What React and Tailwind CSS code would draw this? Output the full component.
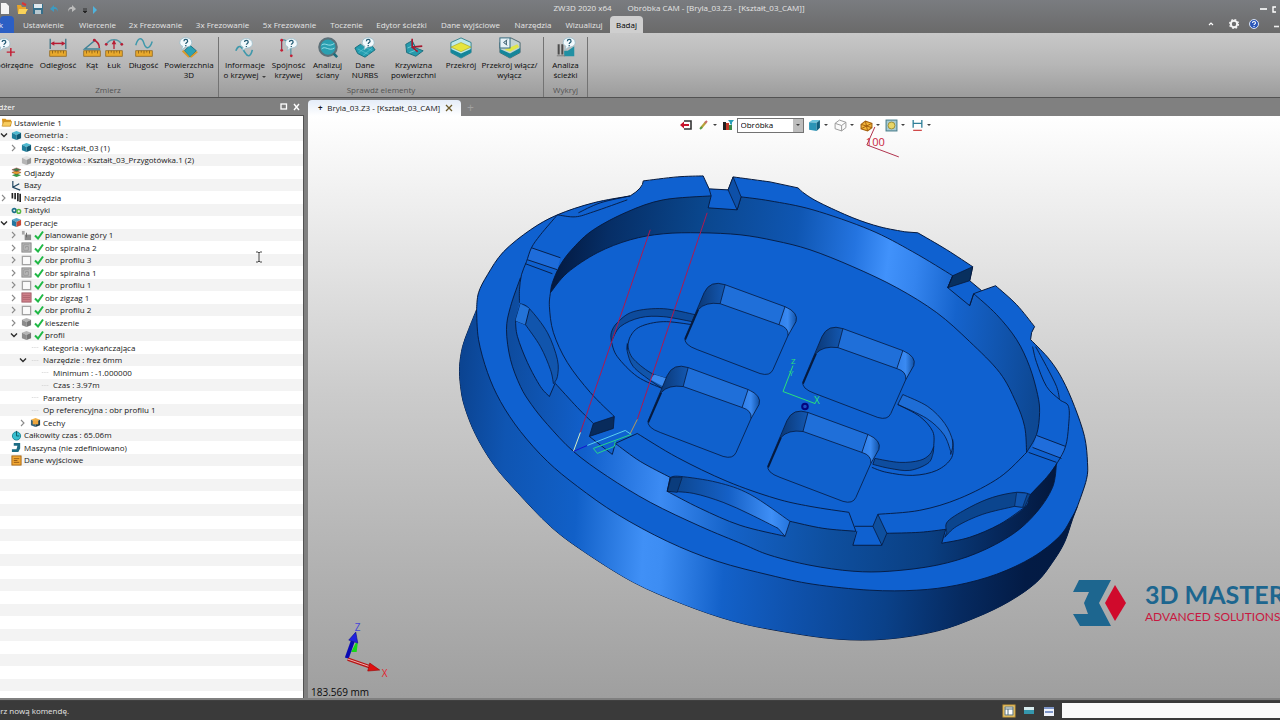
import React from "react";

/* ---------- geometry helpers ---------- */

// smooth line through a list of points, flat array: x, y, x, y ...
const curve = (flat, cmd = "M") => {
  const p = [];
  for (let i = 0; i < flat.length; i += 2) p.push([flat[i], flat[i + 1]]);
  let d = `${cmd}${p[0][0]} ${p[0][1]}`;
  for (let i = 0; i < p.length - 1; i++) {
    const a = p[i - 1] || p[i];
    const b = p[i];
    const c = p[i + 1];
    const e = p[i + 2] || c;
    d += `C${b[0] + (c[0] - a[0]) / 6} ${b[1] + (c[1] - a[1]) / 6} ${c[0] - (e[0] - b[0]) / 6} ${c[1] - (e[1] - b[1]) / 6} ${c[0]} ${c[1]}`;
  }
  return d;
};

const reverse = (flat) => {
  const out = [];
  for (let i = flat.length - 2; i >= 0; i -= 2) out.push(flat[i], flat[i + 1]);
  return out;
};

const baseTop = [630, 196, 593, 203, 557, 215, 530, 230, 503, 252, 487, 275, 478, 293, 476, 310];
const baseSide = [
  476, 310, 468, 330, 462, 347, 459, 367, 460, 387, 464, 407, 475, 435, 493, 465, 517, 493, 550, 527, 583, 552,
  633, 583, 683, 605, 733, 622, 780, 632, 837, 640, 887, 640, 937, 632, 977, 618, 1010, 602, 1037, 583, 1053, 563,
  1065, 543, 1073, 520, 1078, 507,
];
const baseRight = [1078, 507, 1087, 480, 1088, 463, 1085, 437, 1075, 407, 1063, 380, 1050, 360, 1033, 342];
const baseRim = [
  476, 310, 478, 340, 487, 373, 500, 402, 520, 432, 547, 462, 577, 487, 617, 515, 667, 542, 717, 562, 770, 576,
  813, 585, 870, 591, 917, 591, 957, 586, 997, 575, 1033, 558, 1060, 537, 1073, 517, 1078, 507,
];
const crown =
  "L1031 340L1032 333L1035 327" +
  curve([1035, 327, 1017, 305, 996, 286], "L") +
  "L982 291L970 281L973 267" +
  curve([973, 267, 947, 250, 918, 233], "L") +
  curve([905, 232, 880, 227, 853, 218, 820, 203, 805, 194, 798, 188], "L") +
  curve([770, 182, 733, 177], "L") +
  "L728 190L709 189L703 176" +
  curve([703, 176, 677, 177, 643, 181], "L") +
  "Q643 188 630 196Z";

const ringFoot = [
  520, 278, 510, 307, 506, 330, 510, 360, 520, 387, 531, 405, 547, 425, 573, 452, 607, 477, 650, 503, 700, 527,
  743, 545, 770, 556, 810, 566, 853, 572, 890, 572, 937, 566, 977, 554, 1013, 535, 1037, 513, 1053, 488, 1057, 464,
];
const ringEdge =
  curve([1057, 464, 1047, 478, 1031, 495, 1025, 508, 1000, 525, 970, 538, 942, 544], "L") +
  "L946 530" +
  curve([946, 530, 920, 533, 887, 534], "L") +
  "L882 546L853 546L856 532" +
  curve([856, 532, 823, 529, 790, 522], "L") +
  "L785 537" +
  curve([785, 537, 740, 526, 700, 509, 667, 492], "L") +
  "L670 478" +
  curve([670, 478, 640, 462, 615, 444], "L") +
  "L612 455L589 437L593 424" +
  curve([593, 424, 577, 408, 555, 384], "L") +
  "L549 397" +
  curve([549, 397, 540, 387, 527, 363, 517, 337, 515, 321], "L") +
  "L519 303L519 287Z";

const rimBack = [550, 293, 552, 283, 560, 265, 573, 248, 593, 230, 627, 212, 663, 200, 711, 196];
const rimRight = [741, 197, 770, 201, 813, 210, 870, 230, 913, 252, 953, 276];
const rimEnd = [974, 294, 997, 315, 1017, 340, 1030, 367, 1038, 395, 1040, 413, 1037, 435, 1027, 453];
const floorBack = [
  550, 293, 567, 273, 597, 253, 630, 240, 663, 234, 700, 233, 740, 235, 775, 241, 810, 250, 853, 267, 897, 288,
  937, 313, 970, 342, 1000, 373, 1016, 402, 1025, 427, 1027, 453,
];

const Pad = ({ dx, dy }) => (
  <g transform={`translate(${dx} ${dy})`}>
    <path
      d="M685 338L704 293Q710 280 725 285L785 307Q799 313 796 322L788 336L773 370Q770 377 760 374L697 350Q683 345 685 338Z"
      fill="#1061cd"
    />
    <path d="M685 340L704 293Q710 280 725 285L720 304Q705 302 698 310Z" fill="url(#corner)" />
    <path d="M725 285L785 307L779 325L720 304Z" fill="#1f6fd9" />
    <path d="M785 307Q799 313 796 322L788 336Q789 328 779 325Z" fill="url(#shine)" />
    <g fill="none" stroke="#06193c" strokeWidth="0.8">
      <path d="M685 338L704 293Q710 280 725 285L785 307Q799 313 796 322L788 336L773 370Q770 377 760 374L697 350Q683 345 685 338Z" />
      <path d="M698 310Q705 302 720 304L779 325Q789 328 788 336M725 285L720 304M785 307L779 325" />
      <path d="M685 340L698 310" strokeWidth="1.8" />
    </g>
  </g>
);

const Model = () => (
  <svg
    className="absolute inset-0 h-full w-full"
    viewBox="308 116 972 583"
    preserveAspectRatio="xMidYMid meet"
    aria-label="Model 3D"
    fontFamily="Open Sans, sans-serif"
  >
    <defs>
      <linearGradient id="side" gradientUnits="userSpaceOnUse" x1="459" x2="1088" y1="360" y2="400">
        <stop offset="0" stopColor="#0b4390" />
        <stop offset="0.08" stopColor="#0f55b2" />
        <stop offset="0.2" stopColor="#1160c8" />
        <stop offset="0.31" stopColor="#4090f6" />
        <stop offset="0.34" stopColor="#3d8df3" />
        <stop offset="0.44" stopColor="#1361c9" />
        <stop offset="0.55" stopColor="#0f52ad" />
        <stop offset="0.7" stopColor="#0a4189" />
        <stop offset="0.82" stopColor="#062a60" />
        <stop offset="0.92" stopColor="#031b45" />
        <stop offset="1" stopColor="#031a42" />
      </linearGradient>
      <linearGradient id="ring" gradientUnits="userSpaceOnUse" x1="506" x2="1058" y1="400" y2="440">
        <stop offset="0" stopColor="#0e4c9f" />
        <stop offset="0.15" stopColor="#1160cc" />
        <stop offset="0.29" stopColor="#3c8bf3" />
        <stop offset="0.42" stopColor="#1462c8" />
        <stop offset="0.6" stopColor="#0e4f9f" />
        <stop offset="0.78" stopColor="#0a3f82" />
        <stop offset="0.9" stopColor="#06285c" />
        <stop offset="1" stopColor="#03183e" />
      </linearGradient>
      <linearGradient id="inner" gradientUnits="userSpaceOnUse" x1="550" x2="1040" y1="300" y2="360">
        <stop offset="0" stopColor="#031a42" />
        <stop offset="0.1" stopColor="#062e66" />
        <stop offset="0.28" stopColor="#0a468c" />
        <stop offset="0.48" stopColor="#0f56b2" />
        <stop offset="0.6" stopColor="#2474e0" />
        <stop offset="0.67" stopColor="#4192fb" />
        <stop offset="0.73" stopColor="#3484ee" />
        <stop offset="0.82" stopColor="#1563cc" />
        <stop offset="1" stopColor="#0d4894" />
      </linearGradient>
      <linearGradient id="slot" x1="0" x2="1" y1="0" y2="0">
        <stop offset="0" stopColor="#0b4287" />
        <stop offset="0.5" stopColor="#1560c6" />
        <stop offset="0.85" stopColor="#3f8ff6" />
        <stop offset="1" stopColor="#2474dd" />
      </linearGradient>
      <linearGradient id="corner" x1="0" x2="1" y1="0" y2="0">
        <stop offset="0" stopColor="#07295a" />
        <stop offset="1" stopColor="#1358b2" />
      </linearGradient>
      <linearGradient id="shine" x1="0" x2="1" y1="0" y2="0">
        <stop offset="0" stopColor="#2f7fea" />
        <stop offset="0.5" stopColor="#3a8af2" />
        <stop offset="1" stopColor="#0f50a6" />
      </linearGradient>
    </defs>

    {/* body */}
    <path d={curve(baseTop) + curve(baseSide, "L") + curve(baseRight, "L") + crown} fill="#0f61d0" stroke="#06193c" />
    <path d={curve(baseSide) + curve(reverse(baseRim), "L") + "Z"} fill="url(#side)" />
    <path d={curve(ringFoot) + ringEdge} fill="url(#ring)" />

    {/* inside wall */}
    <path
      d={
        curve(rimBack) +
        "L708 208L737 210L741 197" +
        curve(rimRight, "L") +
        "L948 288L970 306L974 294" +
        curve(rimEnd, "L") +
        curve(reverse(floorBack), "L") +
        "Z"
      }
      fill="url(#inner)"
      stroke="#06193c"
      strokeWidth="0.9"
    />
    <path d="M733 177L741 197L737 210L728 190Z" fill="#0e50a8" stroke="#06193c" strokeWidth="0.8" />
    <path d="M973 267L970 281L948 288L953 276Z" fill="#08305f" stroke="#06193c" strokeWidth="0.8" />
    <path d="M593 424L614 417L613 429L589 437Z" fill="#082b5c" stroke="#06193c" strokeWidth="0.8" />
    <path d="M878 515L887 534L882 546L873 527Z" fill="#0e4f9e" stroke="#06193c" strokeWidth="0.8" />

    {/* ramps on the ring */}
    <path d="M531 248L560 258L557 270L527 260Z" fill="#1e6cda" />
    <path d="M1037 436L1066 447L1062 459L1033 448Z" fill="#1f6ddb" />

    {/* left slot */}
    <path d={curve([520, 304, 529, 309, 547, 333, 557, 360, 557, 377, 553, 384]) + curve([553, 384, 550, 370, 540, 347, 525, 325], "L") + "L515 321Z"} fill="#1155ad" stroke="#06193c" strokeWidth="0.8" />
    <path d="M520 304L529 309L525 325L515 321Z" fill="#2373d8" />

    {/* bottom slot */}
    <path d={curve([670, 478, 680, 477, 717, 483, 750, 495, 790, 522]) + "L785 537" + curve([778, 529, 750, 515, 723, 503, 693, 494, 667, 492], "L") + "Z"} fill="url(#slot)" stroke="#06193c" strokeWidth="0.8" />
    <path d="M671 478L682 478L677 493L667 492Z" fill="#0a3c7c" stroke="#06193c" strokeWidth="0.6" />

    {/* right slot */}
    <path d={curve([947, 533, 948, 522, 970, 508, 993, 498, 1017, 493, 1031, 495]) + "L1025 508" + curve([1015, 507, 983, 515, 957, 527, 945, 538], "L") + "Z"} fill="#0b458e" stroke="#06193c" strokeWidth="0.8" />
    <path d="M1017 493L1028 494L1023 508L1015 507Z" fill="#1156b0" stroke="#06193c" strokeWidth="0.6" />

    {/* circular groove */}
    <path d={curve([611, 342, 611, 333, 617, 323, 633, 312, 663, 309, 695, 315]) + curve([692, 322, 663, 317, 640, 318, 620, 327, 611, 342], "L") + "Z"} fill="#0d4b9c" stroke="#06193c" strokeWidth="0.8" />
    <path d={curve([627, 344, 632, 358, 650, 373, 667, 379]) + "L662 389" + curve([650, 381, 633, 367, 627, 352, 627, 344], "L")} fill="#1155ab" stroke="#06193c" strokeWidth="0.8" />
    <path d="M654 375L667 379L663 387L650 380Z" fill="#3a8af0" />
    <path d={curve([903, 395, 928, 407, 945, 424, 953, 442, 951, 455]) + curve([951, 452, 944, 435, 927, 419, 898, 405], "L") + "Z"} fill="#1e6dd6" stroke="#06193c" strokeWidth="0.8" />
    <path d={curve([934, 447, 930, 455, 920, 461, 900, 463, 875, 459]) + "L873 465" + curve([873, 465, 890, 469, 910, 471, 928, 464, 933, 455, 934, 447], "L")} fill="#0e4d9f" stroke="#06193c" strokeWidth="0.8" />

    {/* edges */}
    <g fill="none" stroke="#06193c" strokeWidth="0.9">
      <path d={curve(baseRim)} />
      <path d={curve(ringFoot)} />
      <path d={curve([557, 215, 540, 235, 531, 248, 526, 262, 521, 275, 519, 290, 519, 303])} />
      <path d="M857 532L853 546L882 546M856 532L849 513M855 527L873 527M670 478L667 492M946 530L942 544" />
      <path d={curve([942, 544, 970, 538, 1000, 525, 1025, 508])} />
      <path d={curve([667, 492, 700, 509, 740, 526, 785, 537])} />
      <path d={curve([515, 321, 517, 337, 527, 363, 540, 387, 549, 397]) + "L555 383"} />
      <path d={curve([555, 384, 577, 408, 593, 424]) + "M589 437L612 455L615 444"} />
      <path d={curve([615, 444, 640, 462, 670, 478]) + curve([790, 522, 823, 529, 856, 532]) + curve([887, 534, 920, 533, 946, 530])} />
      <path d={curve([550, 293, 549, 307, 553, 333, 567, 363, 590, 393, 614, 417])} />
      <path d={"M615 444L637 434" + curve([637, 434, 677, 458, 727, 482, 775, 499, 810, 507, 849, 513])} />
      <path d={curve([878, 515, 920, 511, 960, 499, 1000, 478, 1027, 453])} />
      <path d={curve([1031, 495, 1047, 478, 1058, 463, 1066, 447, 1069, 427, 1069, 407, 1060, 400, 1047, 387, 1037, 363, 1033, 347])} />
      <path d={curve([1036, 347, 1047, 367, 1057, 387, 1060, 400])} />
      <path d={curve([557, 215, 575, 217, 593, 212, 627, 200]) + curve([578, 213, 600, 203, 630, 196])} />
      <path d="M531 248L560 258M527 260L557 270M525 264L552 274M1037 436L1066 447M1033 448L1062 459M1029 453L1057 463" />
      <path d={curve([611, 342, 617, 357, 637, 377, 662, 389])} />
      <path d={curve([692, 325, 663, 322, 640, 327, 630, 337, 627, 350])} />
      <path d={curve([898, 405, 920, 417, 933, 432, 934, 447])} />
      <path d={curve([953, 440, 952, 458, 937, 471, 913, 476, 887, 473, 872, 468])} />
      <path d="M948 288L953 276M970 306L974 294L982 291M709 189L711 196M529 309L525 325" />
    </g>

    <Pad dx={0} dy={0} />
    <Pad dx={118} dy={44} />
    <Pad dx={-37} dy={83} />
    <Pad dx={83} dy={128} />

    {/* tool path */}
    <g fill="none" strokeWidth="1">
      <path d="M650 230L580 433M707 213L637 420" stroke="#b0194f" />
      <path d="M580 433L573 452" stroke="#d8efc2" />
      <path d="M637 420L630 434" stroke="#b59a5c" />
      <path d="M573 452L587 446" stroke="#1414d0" />
      <path d="M587 446L625 431L631 435" stroke="#5bd0ee" />
      <path d="M631 435L593 449L597 454L614 447L615 442" stroke="#25d48c" />
    </g>

    {/* local axes */}
    <path d="M793 366L783 392L815 404" fill="none" stroke="#2be07a" />
    <text x="791" y="364" fontSize="8" fill="#2be07a">Z</text>
    <text x="789" y="376" fontSize="8" fill="#2be07a">Y</text>
    <text x="814" y="405" fontSize="10" fill="#2be07a">X</text>
    <circle cx="805" cy="407" r="2.8" fill="#1c4fc4" stroke="#05057c" strokeWidth="2" />

    {/* dimension */}
    <path d="M875 127L867 145L899 157" fill="none" stroke="#b0324c" />
    <text x="866" y="146" fontSize="11" fill="#c8243c">100</text>

    {/* view triad */}
    <path d="M352 652L356 644L355 652Z" fill="#18d818" stroke="#18d818" strokeWidth="2" />
    <path d="M346 659L352 642" stroke="#0a0ab4" strokeWidth="4" />
    <path d="M355 633L357 644L348 641Z" fill="#2020e0" stroke="#0a0a8c" strokeWidth="0.6" />
    <path d="M347 660L370 668" stroke="#b81414" strokeWidth="3.4" />
    <path d="M347 660L369 667.6" stroke="#f0b0b0" strokeWidth="1" />
    <path d="M369 664L379 671L367 672Z" fill="#e01010" stroke="#900" strokeWidth="0.6" />
    <text x="354" y="632" fontSize="10" fill="#4545d8">Z</text>
    <text x="381" y="678" fontSize="10" fill="#e0222c">X</text>
  </svg>
);

/* ---------- ribbon icons, 24 x 24 ---------- */

const Bubble = ({ x = 14, y = 7 }) => (
  <g transform={`translate(${x} ${y})`}>
    <path d="M-6 0C-6 -7 7 -7 7 0C7 4 3 5 0 5L-4 8L-3 4C-5 3 -6 2 -6 0Z" fill="#f2f9fc" stroke="#93bccb" strokeWidth="0.8" />
    <path d="M-1.500 -1.500C-1.500 -4 2.500 -4 2.500 -1.500C2.500 0 0.500 0 0.500 1.500M0.500 2.800V4" fill="none" stroke="#245b74" strokeWidth="1.400" />
  </g>
);

const Ruler = () => (
  <g>
    <rect x="3" y="15" width="18" height="6" fill="#e8a92c" stroke="#8d6112" strokeWidth="0.8" />
    <path d="M6 15V18M9 15V17M12 15V18M15 15V17M18 15V18" stroke="#7a5210" strokeWidth="0.8" />
  </g>
);

const icons = {
  point: (
    <>
      <Bubble x={6} y={7} />
      <path d="M14 12V21M9.500 16.500H18.500" stroke="#c41e34" strokeWidth="1.600" />
    </>
  ),
  distance: (
    <>
      <Ruler />
      <path d="M3.500 2V13M20.500 2V13" stroke="#3b7184" strokeWidth="1.400" />
      <path d="M5 7H19" stroke="#b81c34" strokeWidth="1.600" />
      <path d="M4 7L8 4.500V9.500ZM20 7L16 4.500V9.500Z" fill="#b81c34" />
    </>
  ),
  angle: (
    <>
      <Ruler />
      <path d="M16 3L4 13H21" fill="none" stroke="#3f8397" strokeWidth="1.600" />
      <path d="M14 3Q20 6 20 12" fill="none" stroke="#b81c34" strokeWidth="1.600" />
      <circle cx="14.500" cy="3.500" r="1.500" fill="#b81c34" />
    </>
  ),
  arc: (
    <>
      <Ruler />
      <path d="M3 9C7 1 17 1 21 9" fill="none" stroke="#5796a6" strokeWidth="1.400" />
      <path d="M12 5V13" stroke="#b81c34" strokeWidth="1.400" />
      <path d="M12 3L9.500 8H14.500Z" fill="#b81c34" />
      <circle cx="3.500" cy="8" r="1.500" fill="#b81c34" />
      <circle cx="20.500" cy="8" r="1.500" fill="#b81c34" />
    </>
  ),
  length: (
    <>
      <Ruler />
      <path d="M3 9C6 -1 10 1 12 7S18 14 21 5" fill="none" stroke="#3f98ab" strokeWidth="1.600" />
    </>
  ),
  surface: (
    <>
      <path d="M13 9L20 15L13 22L7 15Z" fill="#2ba2b5" stroke="#1b7081" />
      <path d="M5 15L12 22M14 22L21 16" stroke="#d99a2a" strokeWidth="2" />
      <Bubble x={8} y={6} />
    </>
  ),
  curveInfo: (
    <>
      <path d="M2 15C6 6 9 12 12 17S18 22 20 14" fill="none" stroke="#3f98ab" strokeWidth="1.800" />
      <Bubble x={13} y={7} />
    </>
  ),
  continuity: (
    <>
      <path d="M4 4V14M4 3C8 2 11 5 14 12V20" fill="none" stroke="#5797a6" strokeWidth="1.400" />
      <path d="M4 4V15" stroke="#b81c34" />
      <circle cx="4" cy="3.500" r="1.500" fill="#c41e34" />
      <circle cx="4" cy="14.500" r="1.500" fill="#c41e34" />
      <circle cx="14.500" cy="20.500" r="1.500" fill="#c41e34" />
      <Bubble x={14} y={7} />
    </>
  ),
  analyse: (
    <>
      <circle cx="12" cy="11" r="9.500" fill="#2a9fb0" stroke="#5d7078" strokeWidth="2.400" />
      <path d="M5 9C9 5 12 12 19 7M5 13C9 9 13 16 19 12" fill="none" stroke="#9fe3ea" />
      <path d="M18 18L22 22" stroke="#1d6d7c" strokeWidth="2.800" />
    </>
  ),
  nurbs: (
    <>
      <path d="M1 12L7 8L13 12L20 10L23 14L12 22L4 18Z" fill="#239db0" stroke="#156a7a" />
      <path d="M4 13L16 19M8 9L20 15M5 17L13 11M10 20L20 12" stroke="#6ccbd6" strokeWidth="0.600" />
      <Bubble x={15} y={6} />
    </>
  ),
  curvature: (
    <>
      <path d="M3 8L10 4L14 12L22 15L14 21L4 17Z" fill="#279aac" stroke="#1a6a79" />
      <path d="M5 12L12 9M7 17L15 14" stroke="#8edce4" strokeWidth="0.800" />
      <path d="M10 2V11L21 10M10 11L16 16" fill="none" stroke="#a6182e" strokeWidth="1.800" />
    </>
  ),
  section: (
    <>
      <path d="M1 6L12 1L23 6V17L12 23L1 17Z" fill="#bfe9ea" stroke="#2f7f8b" />
      <path d="M1 11L12 6L23 11L12 16Z" fill="#e7e53e" stroke="#9a9a1e" strokeWidth="0.600" />
      <path d="M1 13L12 18L23 13V17L12 23L1 17Z" fill="#15869a" />
    </>
  ),
  sectionToggle: (
    <>
      <path d="M1 6L13 1L23 6V17L12 23L1 17Z" fill="#c3d3d2" stroke="#45626a" />
      <path d="M6 14L20 8L22 11L12 16Z" fill="#dfe648" />
      <path d="M1 13L12 18L23 12V17L12 23L1 17Z" fill="#15869a" />
      <rect x="1" y="1" width="11" height="11" fill="#e6f2f7" stroke="#2b6277" />
      <path d="M9 3L5 6L9 9M8 4V8" fill="none" stroke="#234b5d" />
    </>
  ),
  path: (
    <>
      <path d="M4 8V19M8 8V19" stroke="#4c4c4c" strokeWidth="2.200" />
      <path d="M10 21V15L14 15L21 10V21Z" fill="#2190a3" />
      <path d="M2 20.500H11" stroke="#777" />
      <Bubble x={15} y={6} />
    </>
  ),
};

const Tool = ({ icon, lines, className, menu }) => (
  <button className={`flex shrink-0 flex-col items-center whitespace-nowrap leading-[10px] ${className}`}>
    <svg className="mb-px h-[22px] w-[22px]" viewBox="0 0 24 24">
      {icons[icon]}
    </svg>
    <span>{lines[0]}</span>
    {lines[1] && (
      <span className="flex items-center gap-1">
        {lines[1]}
        {menu && <span className="mt-1 border-x-2 border-t-2 border-x-transparent border-t-neutral-700" />}
      </span>
    )}
  </button>
);

const Group = ({ label, className, children }) => (
  <div className={`flex shrink-0 flex-col justify-between border-r border-neutral-500 ${className}`}>
    <div className="flex justify-center">{children}</div>
    <div className="pb-px text-center leading-3 text-neutral-600">{label}</div>
  </div>
);

const tabs = [
  ["Ustawienie", "w-[59px]"],
  ["Wiercenie", "w-[49px]"],
  ["2x Frezowanie", "w-[67px]"],
  ["3x Frezowanie", "w-[67px]"],
  ["5x Frezowanie", "w-[67px]"],
  ["Toczenie", "w-[47px]"],
  ["Edytor ścieżki", "w-[63px]"],
  ["Dane wyjściowe", "w-[75px]"],
  ["Narzędzia", "w-[50px]"],
  ["Wizualizuj", "w-[52px]"],
];

const TitleBar = () => (
  <div className="relative flex h-4 items-center justify-between pr-1">
    <div className="flex items-center gap-2">
      <svg className="h-3 w-[100px]" viewBox="0 0 100 12">
        <path d="M1 1H6L9 4V12H1Z" fill="#f4f4f4" />
        <path d="M17 3H21L22 5H26V12H18Z" fill="#e9a629" />
        <path d="M19 7H28L25 12H18Z" fill="#f8d25a" />
        <path d="M22 1L26 3" stroke="#d33" strokeWidth="2" />
        <rect x="33" y="2" width="10" height="10" fill="#356f8b" />
        <rect x="34" y="2" width="8" height="4" fill="#dfe9ee" />
        <rect x="35" y="8" width="6" height="4" fill="#b8c9d1" />
        <path d="M50 7L54 3V5C57 5 58 7 58 10C57 7 56 7 54 7V10Z" fill="#3d9ac0" />
        <path d="M76 7L72 3V5C69 5 68 7 68 10C69 7 70 7 72 7V10Z" fill="#bbb" />
        <path d="M83 7H87M83 9L85 11L87 9Z" stroke="#222" fill="#222" strokeWidth="0.8" />
        <path d="M93 4L97 8L93 12Z" fill="#4fb3dd" />
      </svg>
    </div>
    <div className="absolute inset-x-0 flex justify-center gap-4 pl-[78px] text-neutral-200">
      <span>ZW3D 2020 x64</span>
      <span>Obróbka CAM - [Bryla_03.Z3 - [Kształt_03_CAM]]</span>
    </div>
    <svg className="h-3 w-5" viewBox="0 0 20 12">
      <path d="M4 7H11" stroke="#fff" strokeWidth="1.600" />
      <path d="M17 5H24V10H17Z" fill="none" stroke="#fff" strokeWidth="1.400" />
    </svg>
  </div>
);

const TabBar = () => (
  <div className="flex h-[17px] items-stretch text-neutral-200">
    <button className="flex w-[14px] items-center justify-end overflow-hidden rounded-t-sm bg-[#2c5fc4] pr-[11px] text-white">
      Plik
    </button>
    {tabs.map(([name, width]) => (
      <button key={name} className={`shrink-0 whitespace-nowrap ${width}`}>
        {name}
      </button>
    ))}
    <button className="w-[33px] shrink-0 rounded-t-sm bg-[#cfcfcf] text-black">Badaj</button>
    <svg className="ml-auto h-4 w-[74px] shrink-0" viewBox="0 0 74 16">
      <path d="M3 9L5 7L7 9" fill="none" stroke="#fff" strokeWidth="1.200" />
      <circle cx="28" cy="8" r="3.200" fill="none" stroke="#f4f4f4" strokeWidth="2" />
      <circle cx="28" cy="8" r="4.500" fill="none" stroke="#f4f4f4" strokeWidth="1.200" strokeDasharray="1.800 1.734" />
      <circle cx="48" cy="8" r="4.500" fill="#2a56b8" stroke="#d5e0f5" />
      <path d="M46.500 7C46.500 5 49.500 5 49.500 7C49.500 8 48 8 48 9M48 10V11" fill="none" stroke="#fff" strokeWidth="1.100" />
      <path d="M68 10.500H73" stroke="#eee" strokeWidth="1.600" />
    </svg>
  </div>
);

const Ribbon = () => (
  <div className="flex h-[65px] border-b border-neutral-600 bg-gradient-to-b from-[#c8c8c8] via-[#b6b6b6] to-[#9c9c9c] pt-1 text-neutral-950">
    <Group label="Zmierz" className="w-[219px] pr-[2px]">
      <div className="flex w-[35px] justify-end overflow-hidden pr-[2px]">
        <Tool icon="point" lines={["Współrzędne"]} className="w-[48px]" />
      </div>
      <Tool icon="distance" lines={["Odległość"]} className="w-[46px]" />
      <Tool icon="angle" lines={["Kąt"]} className="w-[22px]" />
      <Tool icon="arc" lines={["Łuk"]} className="w-[22px]" />
      <Tool icon="length" lines={["Długość"]} className="w-[37px]" />
      <Tool icon="surface" lines={["Powierzchnia", "3D"]} className="w-[54px]" />
    </Group>
    <Group label="Sprawdź elementy" className="w-[325px]">
      <Tool icon="curveInfo" lines={["Informacje", "o krzywej"]} menu className="w-[47px]" />
      <Tool icon="continuity" lines={["Spójność", "krzywej"]} className="w-[40px]" />
      <Tool icon="analyse" lines={["Analizuj", "ściany"]} className="w-[38px]" />
      <Tool icon="nurbs" lines={["Dane", "NURBS"]} className="w-[37px]" />
      <Tool icon="curvature" lines={["Krzywizna", "powierzchni"]} className="w-[60px]" />
      <Tool icon="section" lines={["Przekrój"]} className="w-[35px]" />
      <Tool icon="sectionToggle" lines={["Przekrój włącz/", "wyłącz"]} className="w-[62px]" />
    </Group>
    <Group label="Wykryj" className="w-[44px]">
      <Tool icon="path" lines={["Analiza", "ścieżki"]} className="w-[40px]" />
    </Group>
  </div>
);

/* ---------- manager tree ---------- */

const Cube = ({ top, left, right }) => (
  <>
    <path d="M6 1L11 3L6 5.500L1 3Z" fill={top} />
    <path d="M1 3L6 5.500V11L1 9Z" fill={left} />
    <path d="M11 3L6 5.500V11L11 9Z" fill={right} />
  </>
);

const rowIcons = {
  folder: (
    <>
      <path d="M1 2H5L6 3H11V10H2Z" fill="#d9941c" />
      <path d="M3 5H12L10 10H1Z" fill="#f8cc5e" stroke="#b37a12" strokeWidth="0.500" />
    </>
  ),
  part: <Cube top="#4db9d0" left="#1d7f9c" right="#0e5872" />,
  stock: <Cube top="#e3e3e3" left="#b5b5b5" right="#989898" />,
  block: <Cube top="#b5b5b5" left="#8c8c8c" right="#767676" />,
  layers: (
    <>
      <path d="M1 9L6 7L11 9L6 11Z" fill="#3a9a4a" />
      <path d="M1 6L6 4L11 6L6 8Z" fill="#e9a12e" stroke="#7a3a10" strokeWidth="0.500" />
      <path d="M1 3L6 1L11 3L6 5Z" fill="#3e7c4c" stroke="#a33" strokeWidth="0.500" />
    </>
  ),
  axes: <path d="M2 1V8L10 11M2 8L9 4" fill="none" stroke="#1f4560" strokeWidth="1.300" />,
  tools: <path d="M1.500 1V7M4.500 1V8M7.500 1V10M10 2V11" stroke="#222" strokeWidth="1.800" />,
  gears: (
    <>
      <circle cx="3.500" cy="6" r="2" fill="none" stroke="#1d6f88" strokeWidth="1.800" />
      <circle cx="8.500" cy="7" r="2" fill="none" stroke="#58b844" strokeWidth="1.600" />
    </>
  ),
  ops: <Cube top="#56a5c8" left="#2477a0" right="#c64a38" />,
  facing: (
    <>
      <path d="M4 5H11V11H4Z" fill="#8a8a8a" />
      <path d="M1 1H4V5H1Z" fill="#a8a8a8" />
      <path d="M6 3V8" stroke="#666" />
    </>
  ),
  spiral: (
    <>
      <rect x="1" y="1" width="10" height="10" fill="#b9b9b9" stroke="#858585" />
      <path d="M9 3H3V9H8V5H5V7" fill="none" stroke="#8f8f8f" strokeWidth="0.800" />
    </>
  ),
  profile: <rect x="1.500" y="1.500" width="9" height="9" fill="#fafafa" stroke="#a3a3a3" strokeWidth="1.400" />,
  zigzag: (
    <>
      <rect x="1" y="1" width="10" height="10" fill="#cf8089" stroke="#a05c68" />
      <path d="M2 4H10M2 6H10M2 8H10" stroke="#96505e" strokeWidth="0.600" />
    </>
  ),
  features: (
    <>
      <Cube top="#f2b24a" left="#35637a" right="#20404e" />
      <path d="M3 4H9V8H3Z" fill="#eea63c" />
    </>
  ),
  clock: (
    <>
      <circle cx="6" cy="6.500" r="4.500" fill="#36bfd0" stroke="#1b8494" />
      <path d="M6 1V6.500H9" fill="none" stroke="#0d5663" />
    </>
  ),
  machine: <path d="M3 1H10V7L8 11H1V8H6L7 4H3Z" fill="#1c6c84" />,
  output: (
    <>
      <rect x="1" y="1" width="10" height="10" fill="#f2a834" stroke="#a56412" />
      <path d="M3 4H9M3 6H7M3 8H9" stroke="#7b430a" strokeWidth="0.800" />
    </>
  ),
  leader: <path d="M2 6H10" stroke="#c4c4c4" strokeWidth="0.800" strokeDasharray="1 1" />,
};

const Chevron = ({ state }) => (
  <svg className="h-2 w-2 shrink-0" viewBox="0 0 8 8">
    {state === "closed" && <path d="M2 1L5 4L2 7" fill="none" stroke="#8a8a8a" strokeWidth="1.100" />}
    {state === "open" && <path d="M1 2.500L4 5.500L7 2.500" fill="none" stroke="#2c2c2c" strokeWidth="1.400" />}
  </svg>
);

const rows = [
  { pad: "pl-px", root: true, icon: "folder", text: "Ustawienie 1" },
  { icon: "part", text: "Geometria :", state: "open" },
  { pad: "pl-[10px]", icon: "part", text: "Część : Kształt_03 (1)", state: "closed" },
  { pad: "pl-[10px]", icon: "stock", text: "Przygotówka : Kształt_03_Przygotówka.1 (2)" },
  { icon: "layers", text: "Odjazdy" },
  { icon: "axes", text: "Bazy" },
  { icon: "tools", text: "Narzędzia", state: "closed" },
  { icon: "gears", text: "Taktyki" },
  { icon: "ops", text: "Operacje", state: "open" },
  { pad: "pl-[10px]", icon: "facing", check: true, text: "planowanie góry 1", state: "closed" },
  { pad: "pl-[10px]", icon: "spiral", check: true, text: "obr spiralna 2", state: "closed" },
  { pad: "pl-[10px]", icon: "profile", check: true, text: "obr profilu 3", state: "closed" },
  { pad: "pl-[10px]", icon: "spiral", check: true, text: "obr spiralna 1", state: "closed" },
  { pad: "pl-[10px]", icon: "profile", check: true, text: "obr profilu 1", state: "closed" },
  { pad: "pl-[10px]", icon: "zigzag", check: true, text: "obr zigzag 1", state: "closed" },
  { pad: "pl-[10px]", icon: "profile", check: true, text: "obr profilu 2", state: "closed" },
  { pad: "pl-[10px]", icon: "block", check: true, text: "kieszenie", state: "closed" },
  { pad: "pl-[10px]", icon: "block", check: true, text: "profil", state: "open" },
  { pad: "pl-[19px]", icon: "leader", text: "Kategoria : wykańczająca" },
  { pad: "pl-[19px]", icon: "leader", text: "Narzędzie : frez 6mm", state: "open" },
  { pad: "pl-[29px]", icon: "leader", text: "Minimum : -1.000000" },
  { pad: "pl-[29px]", icon: "leader", text: "Czas : 3.97m" },
  { pad: "pl-[19px]", icon: "leader", text: "Parametry" },
  { pad: "pl-[19px]", icon: "leader", text: "Op referencyjna : obr profilu 1" },
  { pad: "pl-[19px]", icon: "features", text: "Cechy", state: "closed" },
  { icon: "clock", text: "Całkowity czas : 65.06m" },
  { icon: "machine", text: "Maszyna (nie zdefiniowano)" },
  { icon: "output", text: "Dane wyjściowe" },
];

const Row = ({ row }) => (
  <li className={`flex items-center whitespace-nowrap odd:h-[13px] even:h-3 ${row.pad || ""}`}>
    {!row.root && (
      <span className="mr-[3px] flex">
        <Chevron state={row.state} />
      </span>
    )}
    <svg className="mr-[2px] h-[11px] w-[11px] shrink-0" viewBox="0 0 12 12">
      {rowIcons[row.icon]}
    </svg>
    {row.check && (
      <svg className="mr-px h-[10px] w-[10px] shrink-0" viewBox="0 0 10 10">
        <path d="M1 5.500L4 8.500L9 1.500" fill="none" stroke="#1fb845" strokeWidth="2" />
      </svg>
    )}
    <span>{row.text}</span>
  </li>
);

const Manager = () => (
  <aside className="flex w-[304px] shrink-0 flex-col">
    <div className="flex h-4 items-center justify-between pr-1 text-white">
      <div className="flex w-[15px] justify-end overflow-hidden">Menedżer</div>
      <svg className="h-[10px] w-5" viewBox="0 0 20 10">
        <rect x="1" y="2" width="5.500" height="5" fill="none" stroke="#fff" strokeWidth="1.300" />
        <path d="M14 2L19 8M19 2L14 8" stroke="#fff" strokeWidth="1.400" />
      </svg>
    </div>
    <div className="relative flex-1 border-r border-t border-neutral-600 bg-[repeating-linear-gradient(#ffffff_0px,#ffffff_13px,#f3f3f3_13px,#f3f3f3_25px)] text-neutral-900">
      <ul>
        {rows.map((row) => (
          <Row key={row.text} row={row} />
        ))}
      </ul>
      <svg className="absolute left-[255px] top-[135px] h-3 w-2" viewBox="0 0 8 12">
        <path d="M1 1H3L4 2L5 1H7M4 2V10M1 11H3L4 10L5 11H7" fill="none" stroke="#333" strokeWidth="0.900" />
      </svg>
    </div>
  </aside>
);

/* ---------- work area ---------- */

const Drop = () => <span className="ml-[3px] border-x-2 border-t-2 border-x-transparent border-t-neutral-700" />;

const ViewTools = () => (
  <div className="relative flex h-[18px] items-center justify-center pl-[22px]">
    <button className="flex w-[18px]" aria-label="Wyjdź">
      <svg className="h-3 w-3" viewBox="0 0 12 12">
        <path d="M4 2H11V10H4" fill="none" stroke="#333" strokeWidth="1.600" />
        <path d="M0 6L4 2.500V5H9V7H4V9.500Z" fill="#c8142c" />
      </svg>
    </button>
    <button className="flex w-[24px] items-center" aria-label="Rysuj">
      <svg className="h-3 w-3" viewBox="0 0 12 12">
        <path d="M3 9L8 3" stroke="#b7a338" strokeWidth="2.200" />
        <path d="M7 4L9 2" stroke="#c86b6b" strokeWidth="2" />
        <path d="M2 10L4 8" stroke="#5a9a4a" strokeWidth="2" />
      </svg>
      <Drop />
    </button>
    <button className="mr-[3px] flex w-3" aria-label="Filtr">
      <svg className="h-3 w-3" viewBox="0 0 12 12">
        <path d="M1 3H4V11H1Z" fill="#222" />
        <path d="M4 4H7V11H4Z" fill="#c03a28" />
        <path d="M7 6H10V11H7Z" fill="#3a8a4a" />
        <path d="M6 1H12L10 3.500V6L8 5V3.500Z" fill="#2ba0b8" />
      </svg>
    </button>
    <label htmlFor="filter" className="sr-only">
      Filtr
    </label>
    <div className="relative mr-1 flex">
      <select
        id="filter"
        className="h-[15px] w-[67px] appearance-none border border-neutral-500 bg-white pl-[3px] text-[8px] leading-3"
      >
        <option>Obróbka</option>
      </select>
      <span className="pointer-events-none absolute inset-y-px right-px flex w-[10px] items-center justify-center bg-[#bdbdbd]">
        <span className="border-x-2 border-t-2 border-x-transparent border-t-neutral-700" />
      </span>
    </div>
    <button className="flex w-[26px] items-center" aria-label="Cieniowanie">
      <svg className="h-[13px] w-[13px]" viewBox="0 0 12 12">
        <path d="M1 3L4 1H11L8 3.500Z" fill="#6cc4dc" />
        <path d="M1 3L8 3.500V11L1 10Z" fill="#2b94b6" />
        <path d="M8 3.500L11 1V8L8 11Z" fill="#115e7c" />
      </svg>
      <Drop />
    </button>
    <button className="flex w-[26px] items-center" aria-label="Krawędzie">
      <svg className="h-[13px] w-[13px]" viewBox="0 0 12 12">
        <path d="M1 4L5 1L11 3V8L7 11L1 9ZM1 4L7 6L11 3M7 6V11" fill="#fafafa" stroke="#9a9a9a" strokeWidth="0.900" />
      </svg>
      <Drop />
    </button>
    <button className="flex w-[25px] items-center" aria-label="Widok">
      <svg className="h-[13px] w-[13px]" viewBox="0 0 12 12">
        <path d="M1 5L5 2L11 4V8L7 11L1 9Z" fill="#f4b73a" stroke="#a3600e" />
        <path d="M1 5L11 8M11 4L1 9M5 2L7 11" stroke="#a3600e" strokeWidth="0.900" />
      </svg>
      <Drop />
    </button>
    <button className="flex w-[26px] items-center" aria-label="Dopasuj">
      <svg className="h-[13px] w-[13px]" viewBox="0 0 12 12">
        <rect x="1" y="1" width="10" height="10" fill="#a9ccd3" stroke="#4b7f8d" />
        <circle cx="6" cy="6" r="3.200" fill="#e8d667" stroke="#98862c" strokeWidth="0.800" />
      </svg>
      <Drop />
    </button>
    <button className="flex w-[20px] items-center" aria-label="Wymiar">
      <svg className="h-[13px] w-[13px]" viewBox="0 0 12 12">
        <path d="M2 1V8M10 1V8M2 4H10" stroke="#2f7f98" strokeWidth="1.200" />
        <path d="M2 10.500H10" stroke="#d04a4a" strokeWidth="1.200" />
      </svg>
      <Drop />
    </button>
  </div>
);

const Logo = () => (
  <div className="absolute bottom-[71px] right-0 flex w-[207px] gap-[18px]">
    <svg className="h-[48px] w-[54px] shrink-0" viewBox="0 0 54 48">
      <path d="M6 1H38L26 24L38 47H7L0 35H15L11 24L16 13H0Z" fill="#1d668f" />
      <path d="M42 6L53 24L42 42L32 24Z" fill="#d00a2c" />
    </svg>
    <div className="whitespace-nowrap font-[Lato,sans-serif]">
      <div className="text-[25px] font-bold leading-[30px] text-[#1d668f]">3D MASTER</div>
      <div className="text-[12px] leading-4 text-[#c81840]">ADVANCED SOLUTIONS</div>
    </div>
  </div>
);

const Workspace = () => (
  <main className="flex min-w-0 flex-1 flex-col">
    <div className="flex h-[17px] items-end text-neutral-900">
      <button className="flex h-4 w-[153px] items-center justify-between rounded-t-sm bg-gradient-to-b from-[#e4ecf8] to-white pl-[10px] pr-2">
        <span className="font-bold">+</span>
        <span>Bryla_03.Z3 - [Kształt_03_CAM]</span>
        <svg className="h-2 w-2" viewBox="0 0 8 8">
          <path d="M1 1L7 7M7 1L1 7" stroke="#6b5a2a" strokeWidth="1.300" />
        </svg>
      </button>
      <button className="px-[6px] text-[12px] leading-4 text-neutral-400">+</button>
    </div>
    <div className="relative flex flex-1 flex-col overflow-hidden bg-[linear-gradient(#ffffff,#f6f6f6_8%,#cbcbcb_48%,#b3b3b3_76%,#9f9f9f)]">
      <Model />
      <ViewTools />
      <Logo />
      <div className="relative mt-auto pl-[3px] text-[10px] leading-3 text-neutral-950">183.569 mm</div>
    </div>
  </main>
);

const StatusBar = () => (
  <footer className="flex h-5 items-center border-t border-neutral-700 bg-[#3a3a3a] text-neutral-200">
    <div className="flex w-[69px] justify-end overflow-hidden whitespace-nowrap">Wybierz nową komendę.</div>
    <svg className="ml-auto h-4 w-[60px]" viewBox="0 0 60 16">
      <rect x="1" y="2" width="12" height="12" fill="#f2cf7a" stroke="#c79a34" />
      <rect x="3" y="4" width="8" height="8" fill="#fff" stroke="#55707c" />
      <path d="M3 6H11M6 6V12" stroke="#55707c" />
      <rect x="22" y="4" width="10" height="7" fill="#d8ecee" />
      <rect x="22" y="7" width="10" height="4" fill="#3597ad" />
      <rect x="42" y="4" width="10" height="9" fill="#eef2fa" />
      <path d="M42 5H52M43 9H51" stroke="#5a78b8" strokeWidth="1.400" />
    </svg>
    <input aria-label="Komenda" className="h-[15px] w-[218px] bg-[#fafafa] px-1 text-neutral-900" />
  </footer>
);

const App = () => {
  return (
    <div className="flex min-h-screen flex-col overflow-hidden bg-[#808080] font-['Open_Sans','Noto_Sans',sans-serif] text-[8px] leading-3">
      <header className="shrink-0">
        <div className="bg-gradient-to-b from-[#7a7c80] to-[#6a6a6a]">
          <TitleBar />
          <TabBar />
        </div>
        <Ribbon />
      </header>
      <div className="flex flex-1 gap-1 pb-[2px] pt-px">
        <Manager />
        <Workspace />
      </div>
      <StatusBar />
    </div>
  );
};

export default App;
